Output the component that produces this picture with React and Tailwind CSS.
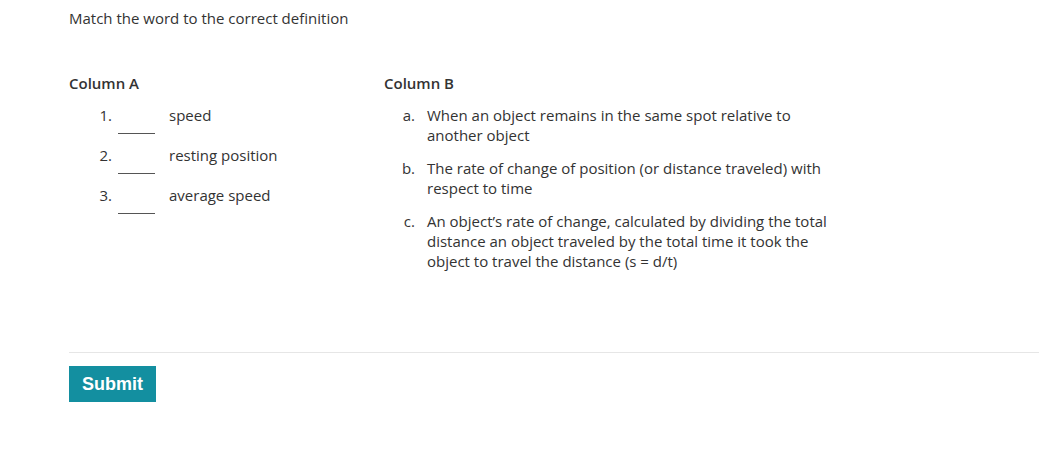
const wordsA = ["speed", "resting position", "average speed"];

const defsB = [
  { key: "a.", text: "When an object remains in the same spot relative to another object" },
  { key: "b.", text: "The rate of change of position (or distance traveled) with respect to time" },
  { key: "c.", text: "An object’s rate of change, calculated by dividing the total distance an object traveled by the total time it took the object to travel the distance (s = d/t)" },
];

export default function App() {
  return (
    <div className="min-h-[460px] bg-white pl-[69px] text-[15px] leading-5 text-[#333]" style={{ fontFamily: '"Open Sans", sans-serif' }}>
      <p className="pt-[8px]">Match the word to the correct definition</p>

      <div className="mt-[45px] flex">
        <div className="w-[315px]">
          <h3 className="font-semibold">Column A</h3>
          <ol className="mt-3">
            {wordsA.map((w, i) => (
              <li key={w} className="flex h-10">
                <span className="w-[49px] text-right pr-[6px]">{i + 1}.</span>
                <span className="h-[29px] w-[37px] border-b border-[#555]" />
                <span className="ml-[14px]">{w}</span>
              </li>
            ))}
          </ol>
        </div>
        <div>
          <h3 className="font-semibold">Column B</h3>
          <ol className="mt-3 flex flex-col gap-[13px]">
            {defsB.map((d) => (
              <li key={d.key} className="flex">
                <span className="w-[43px] text-right pr-[12px]">{d.key}</span>
                <span className="w-[405px]">{d.text}</span>
              </li>
            ))}
          </ol>
        </div>
      </div>

      <hr className="mt-[81px] border-[#e6e6e6]" />
      <button className="mt-[13px] h-9 w-[87px] bg-[#138fa0] text-[18px] font-bold text-white" style={{ fontFamily: '"Liberation Sans", Arial, sans-serif' }}>
        Submit
      </button>
    </div>
  );
}
